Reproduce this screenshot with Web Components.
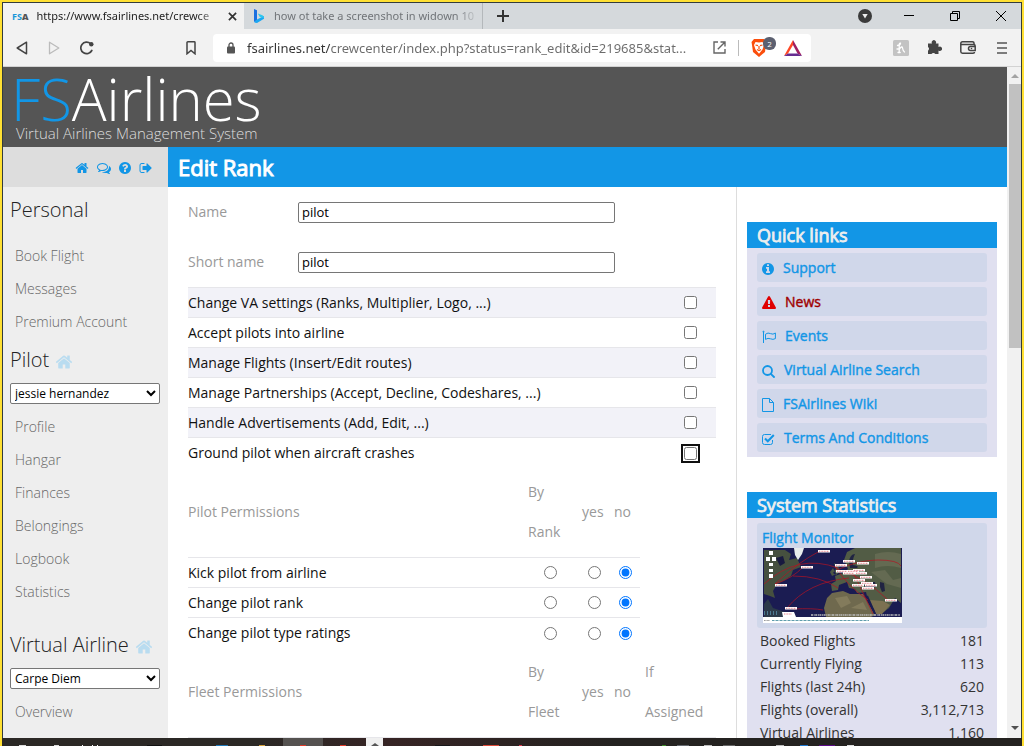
<!DOCTYPE html>
<html lang="en">
<head>
<meta charset="utf-8">
<meta name="viewport" content="width=device-width, initial-scale=1">
<title>FSAirlines - Edit Rank</title>
<style>
  html, body { height: 100%; margin: 0; }
  body {
    font-family: "Open Sans", "Noto Sans", sans-serif;
    font-size: 14px;
    --accent: #1296e6;
    --panel: #e0e0f0;
    --tile: #d0d7ea;
    --muted: #999;
    --line: #e6e6ea;
  }
</style>
</head>
<body>
<browser-window>
  <tab-strip slot="tabs"></tab-strip>
  <tool-bar slot="toolbar"></tool-bar>
  <fs-page>
    <fs-banner slot="banner"></fs-banner>
    <user-links slot="user"></user-links>
    <span slot="title">Edit Rank</span>
    <side-nav slot="nav">
      <nav-section heading="Personal" items="Book Flight|Messages|Premium Account"></nav-section>
      <nav-section heading="Pilot" home choice="jessie hernandez" items="Profile|Hangar|Finances|Belongings|Logbook|Statistics"></nav-section>
      <nav-section heading="Virtual Airline" home spaced choice="Carpe Diem" items="Overview"></nav-section>
    </side-nav>
    <text-field label="Name" value="pilot"></text-field>
    <text-field label="Short name" value="pilot"></text-field>
    <option-table rows="Change VA settings (Ranks, Multiplier, Logo, ...)|Accept pilots into airline|Manage Flights (Insert/Edit routes)|Manage Partnerships (Accept, Decline, Codeshares, ...)|Handle Advertisements (Add, Edit, ...)|Ground pilot when aircraft crashes"></option-table>
    <permission-table caption="Pilot Permissions" scope="By Rank" rows="Kick pilot from airline|Change pilot rank|Change pilot type ratings"></permission-table>
    <permission-table caption="Fleet Permissions" scope="By Fleet" extra="If Assigned" rows=""></permission-table>
    <side-panel slot="aside" heading="Quick links">
      <quick-link icon="info">Support</quick-link>
      <quick-link icon="warning" alert>News</quick-link>
      <quick-link icon="flag">Events</quick-link>
      <quick-link icon="search">Virtual Airline Search</quick-link>
      <quick-link icon="file">FSAirlines Wiki</quick-link>
      <quick-link icon="check">Terms And Conditions</quick-link>
    </side-panel>
    <side-panel slot="aside" heading="System Statistics">
      <flight-monitor></flight-monitor>
      <stat-table></stat-table>
    </side-panel>
  </fs-page>
  <task-bar slot="taskbar"></task-bar>
</browser-window>

<script>
const FA = '0 0 1792 1792';
const ICONS = {
  home: [FA, '<path fill="currentColor" d="M1472 992v480q0 26-19 45t-45 19h-384v-384h-256v384h-384q-26 0-45-19t-19-45v-480q0-1 .5-3t.5-3l575-474 575 474q1 2 1 6zm223-69l-62 74q-8 9-21 11h-3q-13 0-21-7l-692-577-692 577q-12 8-24 7-13-2-21-11l-62-74q-8-10-7-23.5t11-21.5l719-599q32-26 76-26t76 26l244 204v-195q0-14 9-23t23-9h192q14 0 23 9t9 23v408l219 182q10 8 11 21.5t-7 23.5z"/>'],
  help: ['128 128 1536 1536', '<path fill="currentColor" d="M1024 1376v-192q0-14-9-23t-23-9h-192q-14 0-23 9t-9 23v192q0 14 9 23t23 9h192q14 0 23-9t9-23zm256-672q0-88-55.5-163t-138.5-116-170-41q-243 0-371 213-15 24 8 42l132 100q7 6 19 6 16 0 25-12 53-68 86-92 34-24 86-24 48 0 85.5 26t37.5 59q0 38-20 61t-68 45q-63 28-115.5 86.5t-52.5 125.5v36q0 14 9 23t23 9h192q14 0 23-9t9-23q0-19 21.5-49.5t54.5-49.5q32-18 49-28.5t46-35 44.5-48 28-60.5 12.5-81zm384 192q0 209-103 385.5t-279.5 279.5-385.5 103-385.5-103-279.5-279.5-103-385.5 103-385.5 279.5-279.5 385.5-103 385.5 103 279.5 279.5 103 385.5z"/>'],
  chat: [FA, '<path fill="currentColor" d="M704 384q-153 0-286 52t-211.5 141-78.5 191q0 82 53 158t149 132l97 56-35 84q34-20 62-39l44-31 53 10q78 14 153 14 153 0 286-52t211.5-141 78.5-191-78.5-191-211.5-141-286-52zm0-128q191 0 353.5 68.5t256.5 186.5 94 257-94 257-256.5 186.5-353.5 68.5q-86 0-176-16-124 88-278 128-36 9-86 16h-3q-11 0-20.5-8t-11.5-21q-1-3-1-6.5t.5-6.5 2-6l2.5-5 3.5-5.5 4-5 4.5-5 4-4.5q5-6 23-25t26-29.5 22.5-29 25-38.5 20.5-44q-124-72-195-177t-71-224q0-139 94-257t256.5-186.5 353.5-68.5zm822 1169q10 24 20.5 44t25 38.5 22.5 29 26 29.5 23 25q1 1 4 4.5t4.5 5 4 5 3.5 5.5l2.5 5 2 6 .5 6.5-1 6.5q-3 14-13 22t-22 7q-50-7-86-16-154-40-278-128-90 16-176 16-271 0-472-132 58 4 88 4 161 0 309-45t264-129q125-92 192-212t67-254q0-77-23-152 129 71 204 178t75 230q0 120-71 224.5t-195 176.5z"/>'],
  exit: [FA, '<path fill="currentColor" d="M704 1440q0 4 1 20t.5 26.5-3 23.5-10 19.5-20.5 6.5h-320q-119 0-203.5-84.5t-84.5-203.5v-704q0-119 84.5-203.5t203.5-84.5h320q13 0 22.5 9.5t9.5 22.5q0 4 1 20t.5 26.5-3 23.5-10 19.5-20.5 6.5h-320q-66 0-113 47t-47 113v704q0 66 47 113t113 47h312l11.5 1 11.5 3 8 5.5 7 9 2 13.5zm928-544q0 26-19 45l-544 544q-19 19-45 19t-45-19-19-45v-288h-448q-26 0-45-19t-19-45v-384q0-26 19-45t45-19h448v-288q0-26 19-45t45-19 45 19l544 544q19 19 19 45z"/>'],
  info: ['128 128 1536 1536', '<path fill="currentColor" d="M1152 1376v-160q0-14-9-23t-23-9h-96v-512q0-14-9-23t-23-9h-320q-14 0-23 9t-9 23v160q0 14 9 23t23 9h96v320h-96q-14 0-23 9t-9 23v160q0 14 9 23t23 9h448q14 0 23-9t9-23zm-128-896v-160q0-14-9-23t-23-9h-192q-14 0-23 9t-9 23v160q0 14 9 23t23 9h192q14 0 23-9t9-23zm640 416q0 209-103 385.5t-279.5 279.5-385.5 103-385.5-103-279.5-279.5-103-385.5 103-385.5 279.5-279.5 385.5-103 385.5 103 279.5 279.5 103 385.5z"/>'],
  warning: [FA, '<path fill="currentColor" d="M1024 1375v-190q0-14-9.5-23.5t-22.5-9.5h-192q-13 0-22.5 9.5t-9.5 23.5v190q0 14 9.5 23.5t22.5 9.5h192q13 0 22.5-9.5t9.5-23.5zm-2-374l18-459q0-12-10-19-13-11-24-11h-220q-11 0-24 11-10 7-10 21l17 457q0 10 10 16.5t24 6.5h185q14 0 23.5-6.5t10.5-16.5zm-14-934l768 1408q35 63-2 126-17 29-46.5 46t-63.5 17h-1536q-34 0-63.5-17t-46.5-46q-37-63-2-126l768-1408q17-31 47-49t65-18 65 18 47 49z"/>'],
  flag: ['0 0 14 14', '<g fill="none" stroke="currentColor"><path d="M1.5 1.5V13" /><circle cx="1.5" cy="1.8" r=".6"/><path d="M3.5 4.2Q6 2.2 8.5 3.6T13.4 3v5.6Q11 10 8.500 8.800T3.500 9.400Z"/></g>'],
  search: ['0 0 13 13', '<g fill="none" stroke="currentColor" stroke-width="1.800"><circle cx="5.500" cy="5.500" r="4.500"/><path d="M8.800 8.800L12 12" stroke-linecap="round"/></g>'],
  file: ['0 0 12 14', '<g fill="none" stroke="currentColor"><path d="M.5 .5H7.500L11.500 4.500V13.500H.5Z M7.500 .5V4.500H11.500"/></g>'],
  check: ['0 0 13 12', '<g fill="none" stroke="currentColor"><path d="M10.500 7v2.500q0 2-2 2h-6q-2 0-2-2v-6q0-2 2-2h6.500"/><path d="M3 5.500L5.800 8.300 11.800 2" stroke-width="2"/></g>'],
  back: ['0 0 12 14', '<path d="M10.500 1.200V12.800L1.200 7Z" fill="none" stroke="#444" stroke-width="1.500" stroke-linejoin="round"/>'],
  forward: ['0 0 12 14', '<path d="M1.500 1.200V12.800L10.800 7Z" fill="none" stroke="#bbb" stroke-width="1.300" stroke-linejoin="round"/>'],
  reload: ['0 0 14 14', '<path d="M11.800 9.500A5.800 5.800 0 1 1 10.500 2.600" fill="none" stroke="#444" stroke-width="1.700" stroke-linecap="round"/><circle cx="11.300" cy="3.300" r="2.200" fill="#444"/>'],
  bookmark: ['0 0 10 14', '<path d="M1 1.500Q1 .8 1.800 .8H8.200Q9 .8 9 1.500V12.800L5 9.500 1 12.800Z" fill="none" stroke="#444" stroke-width="1.500"/>'],
  lock: ['0 0 8 12', '<path d="M2 5V3a2 2 0 0 1 4 0V5" fill="none" stroke="#555" stroke-width="1.300"/><rect y="4.500" width="8" height="7" rx="1" fill="#555"/>'],
  share: ['0 0 13 13', '<path d="M5 1H1V12H12V8M7.500 1H12V5.500M12 1L4.800 8.200" fill="none" stroke="#666" stroke-width="1.400"/>'],
  shield: ['0 0 16 18', '<path d="M3 0H13L15.500 3 15 6 14 13 8 18 2 13 1 6 .5 3Z" fill="#fb4e0c"/><path d="M4.500 3L8 3.500 11.500 3 13 6 11.500 10.500 8 14.800 4.500 10.500 3 6Z" fill="#fff"/><path d="M4.500 6L7 6.700M11.500 6L9 6.700M8 7v3M6 10.500L8 11.500 10 10.500" stroke="#fb4e0c" stroke-width="1.200" fill="none"/>'],
  bat: ['0 0 18 16', '<path d="M9 0L0 16 4 13.500 9 5Z" fill="#ff4724"/><path d="M9 0L18 16 13.500 13.500 9 5Z" fill="#9e1f63"/><path d="M0 16H18L13.500 13.500H4Z" fill="#662d91"/>'],
  honey: ['0 0 16 16', '<rect width="16" height="16" rx="1.500" fill="#c3c3c3"/><path d="M4.500 5.500Q7.500 5 7.500 3.200 6.200 2.600 6.200 6V12.500M6.200 9.500Q9 5 9.500 8T11.500 12M4 9H6M5 12.500H7.200" fill="none" stroke="#fff" stroke-width="1.300" stroke-linecap="round"/>'],
  puzzle: ['0 0 15 15', '<path fill="#444" d="M1 3.500H5A2.200 2.200 0 1 1 8.800 3.500H11.500V7A2.200 2.200 0 1 1 11.500 10.500V14H8.300A2.200 2.200 0 0 0 4.500 14H1V10.700A2.200 2.200 0 0 0 1 7Z"/>'],
  wallet: ['0 0 16 13', '<g fill="none" stroke="#444" stroke-width="1.500"><path d="M14 3.500V2Q14 .8 12.500 .8H2.500Q.8 .8 .8 2.500V10.500Q.8 12.200 2.500 12.200H13Q14.500 12.200 14.500 11"/><path d="M1 3.500H13.500Q15.200 3.500 15.200 5V9.500H10.500a2 2 0 0 1 0-4H15"/></g><circle cx="11.500" cy="7.500" r=".8" fill="#444"/>'],
  menu: ['0 0 10 12', '<path d="M0 1H10M0 6H10M0 11H10" stroke="#555" stroke-width="1.600"/>'],
  plus: ['0 0 12 12', '<path d="M6 0V12M0 6H12" stroke="#333" stroke-width="2"/>'],
  close: ['0 0 8 8', '<path d="M.8 .8L7.200 7.200M7.200 .8L.8 7.200" stroke="#333" stroke-width="1.500"/>'],
  account: ['0 0 14 14', '<circle cx="7" cy="7" r="7" fill="#3b3b3b"/><path d="M4.300 5H9.700L7 9.500Z" fill="#eee"/>'],
  minimize: ['0 0 10 10', '<path d="M0 4.500H10" stroke="#000"/>'],
  restore: ['0 0 10 10', '<path d="M.5 2.500H7.500V9.500H.5ZM2.500 2.500V.5H9.500V7.500H7.500" fill="none" stroke="#000"/>'],
  quit: ['0 0 10 10', '<path d="M0 0L10 10M10 0L0 10" stroke="#000"/>'],
  bing: ['0 0 10 14', '<path d="M0 0L3 1.200V11L0 13Z" fill="#1b6fe0"/><path d="M0 13L3 10.500 10 7V9.800L3 14Q1 14 0 13Z" fill="#1ba7f2"/><path d="M3.800 4.500L8.500 6.300Q10 7.200 10 9L5.800 8Z" fill="#2fc6ee"/>']
};

class Base extends HTMLElement {
  connectedCallback() {
    if (this.shadowRoot) return;
    this.attachShadow({ mode: 'open' }).innerHTML =
      '<style>:host{display:block;box-sizing:border-box}*{box-sizing:border-box}' +
      'a{color:inherit;text-decoration:none}' +
      'button{border:0;padding:0;background:none;font:inherit;color:inherit;display:flex;align-items:center;justify-content:center}' +
      this.css() + '</style>' + this.html();
  }
  list(name) { return this.getAttribute(name).split('|').filter(Boolean); }
}
const define = (name, css, html = '<slot></slot>') => customElements.define(name, class extends Base {
  css() { return css; }
  html() { return typeof html === 'function' ? html(this) : html; }
});
const icon = (name, w, h = w) => `<ui-icon name="${name}" w="${w}" h="${h}"></ui-icon>`;

define('ui-icon', ':host{flex:none;line-height:0}svg{display:block}', el => {
  const [box, body] = ICONS[el.getAttribute('name')];
  return `<svg aria-hidden="true" width="${el.getAttribute('w')}" height="${el.getAttribute('h')}" viewBox="${box}">${body}</svg>`;
});

define('browser-window', `
  :host{height:100vh;display:flex;flex-direction:column;border:solid #ffe033;border-width:2px 2px 0;background:#d5d9dc;overflow:hidden}
  .frame{flex:1;min-height:0;display:flex;flex-direction:column;border:1px solid #333c3c;border-bottom:0}
  .view{flex:1;min-height:0;display:flex;border-top:1px solid #d2d2d2}
  slot[name=taskbar]::slotted(*){flex:none}
  .page{flex:1;min-width:0;overflow:hidden}
  .bar{width:14px;background:#f1f1f1;display:flex;flex-direction:column;align-items:center;padding:7px 0 4px 2px}
  .up,.down{border:solid transparent;border-width:0 4px 4px;border-bottom-color:#a3a3a3;margin-bottom:6px}
  .thumb{width:100%;height:40%;background:#c1c1c1}
  .down{border-width:4px 4px 0;border-top-color:#505050;margin:auto 0 4px}`,
  `<div class="frame"><slot name="tabs"></slot><slot name="toolbar"></slot>
   <div class="view"><div class="page"><slot></slot></div>
   <div class="bar"><i class="up"></i><i class="thumb"></i><i class="down"></i></div></div></div>
   <slot name="taskbar"></slot>`);

define('tab-strip', `
  :host{height:26px;display:flex;align-items:stretch;font:11px "Noto Sans","Open Sans",sans-serif;color:#333}
  .tab{width:241px;display:flex;align-items:center;padding:0 7px 0 9px;gap:8px;white-space:nowrap}
  .on{background:#f2f2f2;color:#222}
  .tab + .tab{color:#707478;width:239px;border-right:1px solid #b4b8bb;padding:0 2px 0 10px;gap:10px}
  .title{flex:1;min-width:0;overflow:hidden;mask-image:linear-gradient(90deg,#000 88%,transparent);line-height:20px;justify-content:flex-start}
  .fav{font:700 9px "Open Sans",sans-serif;color:#1b96d8}.fav b{color:#555}
  .add{width:40px}
  .sys{margin-left:auto;display:flex;gap:36px;padding-right:15px}
  .sys button:first-child{margin-right:-4px}`,
  `<div class="tab on"><span class="fav">FS<b>A</b></span><button class="title">https://www.fsairlines.net/crewce</button><button aria-label="Close tab">${icon('close', 9)}</button></div>
   <div class="tab">${icon('bing', 10, 14)}<button class="title">how ot take a screenshot in widown 10</button></div>
   <button class="add" aria-label="New tab">${icon('plus', 12)}</button>
   <div class="sys"><button aria-label="Search tabs">${icon('account', 14)}</button><button aria-label="Minimize">${icon('minimize', 10)}</button><button aria-label="Restore">${icon('restore', 10)}</button><button aria-label="Close">${icon('quit', 10)}</button></div>`);

define('tool-bar', `
  :host{height:37px;display:flex;align-items:center;background:#f2f2f2;padding:0 14px 0 13px}
  .nav{display:flex;gap:20px;width:170px}
  .nav + button{margin-right:17px}
  .omni{flex:1;max-width:598px;height:28px;background:#fff;border-radius:4px;display:flex;align-items:center;padding:0 9px 0 14px;gap:12px;margin-right:auto}
  input{flex:1;min-width:0;height:24px;border:0;padding:0;outline:0;font:13px "Noto Sans","Open Sans",sans-serif;color:transparent;background:linear-gradient(90deg,#333 84px,#6b6b6b 84px);-webkit-background-clip:text;background-clip:text}
  .sep{width:1px;height:16px;background:#bbb}
  .shield{position:relative;margin-right:5px}
  .badge{position:absolute;left:12px;top:-2px;width:13px;height:13px;border-radius:6px;background:#5c6070;color:#fff;font-size:8px;line-height:13px;text-align:center}
  .ext{display:flex;gap:18px;margin-left:16px}
  .ext button:last-child{margin-left:3px}`,
  `<div class="nav"><button aria-label="Back">${icon('back', 12, 14)}</button><button aria-label="Forward">${icon('forward', 12, 14)}</button><button aria-label="Reload">${icon('reload', 14)}</button></div>
   <button aria-label="Bookmark">${icon('bookmark', 10, 14)}</button>
   <div class="omni">${icon('lock', 8, 12)}<input aria-label="Address" value="fsairlines.net/crewcenter/index.php?status=rank_edit&amp;id=219685&amp;stat...">
   <button aria-label="Share">${icon('share', 13)}</button><i class="sep"></i><button class="shield" aria-label="Shields">${icon('shield', 16, 18)}<span class="badge">2</span></button><button aria-label="Rewards">${icon('bat', 18, 16)}</button></div>
   <div class="ext"><button aria-label="Honey">${icon('honey', 16)}</button><button aria-label="Extensions">${icon('puzzle', 15)}</button><button aria-label="Wallet">${icon('wallet', 16, 13)}</button><button aria-label="Menu">${icon('menu', 10, 12)}</button></div>`);

define('fs-page', `
  .strip{display:flex;height:40px}
  .user{width:165px;background:#ddd}
  h1{flex:1;margin:0;padding-left:10px;background:var(--accent);color:#fff;font-size:22px;line-height:40px;font-weight:400;-webkit-text-stroke:1px}
  .body{display:flex;background:#fff}
  .nav{width:165px;flex:none;background:#eee;min-height:700px}
  main{flex:1;min-width:0;padding:0 20px}
  aside{width:271px;flex:none;border-left:1px solid #ddd;padding:35px 10px 0;display:flex;flex-direction:column;gap:35px}`,
  `<slot name="banner"></slot><div class="strip"><div class="user"><slot name="user"></slot></div><h1><slot name="title"></slot></h1></div>
   <div class="body"><div class="nav"><slot name="nav"></slot></div><main><slot></slot></main><aside><slot name="aside"></slot></aside></div>`);

define('fs-banner', `
  :host{height:80px;background:#555;padding:4px 0 0 8px;font-weight:300;color:#fff}
  .logo{font-size:58px;line-height:56px;height:52px}
  .logo b{font-weight:300;color:var(--accent)}
  .tag{font-size:15px;line-height:20px;color:#ddd;padding-left:5px}`,
  `<div class="logo"><b>FS</b>Airlines</div><div class="tag">Virtual Airlines Management System</div>`);

define('user-links', `
  :host{height:40px;display:flex;align-items:center;justify-content:flex-end;gap:8px;color:var(--accent);padding:2px 15px 0 0}`,
  `<a href="#" aria-label="Home">${icon('home', 14)}</a><a href="#" aria-label="Messages">${icon('chat', 14)}</a><a href="#" aria-label="Help">${icon('help', 12)}</a><a href="#" aria-label="Sign out">${icon('exit', 14)}</a>`);

define('side-nav', ':host{padding:1px 8px 0 7px}');

define('nav-section', `
  :host{padding-top:7px}
  :host([spaced]){padding-top:22px}
  h2{display:flex;align-items:center;gap:6px;margin:0 0 14px;font-size:20px;line-height:30px;font-weight:300;color:#222}
  :host([choice]) h2{margin-bottom:8px}
  h2 ui-icon{color:#b9dcf0;padding-top:4px}
  select{display:block;width:150px;height:21px;margin-bottom:6px;border:1px solid #767676;border-radius:2px;background:#fff;color:#000;font:12px "Open Sans",sans-serif;padding:0}
  ul{list-style:none;margin:0;padding:0 0 0 5px;font-weight:300;color:#666;line-height:33px}`,
  el => `<h2>${el.getAttribute('heading')}${el.hasAttribute('home') ? icon('home', 18) : ''}</h2>
   ${el.hasAttribute('choice') ? `<select aria-label="${el.getAttribute('heading')}"><option>${el.getAttribute('choice')}</option></select>` : ''}
   <ul>${el.list('items').map(t => `<li><a href="#">${t}</a></li>`).join('')}</ul>`);

define('text-field', `
  :host{height:50px;display:flex;align-items:center}
  label{width:110px;padding-bottom:2px;color:var(--muted)}
  input{width:317px;height:21px;border:1px solid #767676;border-radius:2px;padding:0 3px;font:13px "Open Sans",sans-serif;color:#000;background:#fff}`,
  el => `<label for="f">${el.getAttribute('label')}</label><input id="f" type="text" value="${el.getAttribute('value')}">`);

define('option-table', `
  table{width:100%;border-collapse:collapse}
  th,td{height:30px;padding:0;border-top:1px solid var(--line);color:#111;font-weight:400;text-align:left;line-height:20px}
  td{width:51px;text-align:center;padding-bottom:2px}
  input{width:13px;height:13px;margin:0;vertical-align:middle}
  tr:nth-child(odd){background:#f2f2f8}
  tr:last-child input{outline:2px solid #101010;outline-offset:1px;border-radius:2px}`,
  el => `<table>${el.list('rows').map((t, i) => `<tr><th scope="row"><label for="o${i}">${t}</label></th><td><input type="checkbox" id="o${i}"></td></tr>`).join('')}</table>`);

define('permission-table', `
  table{border-collapse:collapse;table-layout:fixed;width:452px}
  :host([extra]) table{width:528px}
  .label{width:340px}.scope{width:54px}.yes{width:32px}.no{width:26px}.extra{width:76px}
  thead th{height:90px;padding:0;line-height:40px;color:var(--muted);font-weight:400;text-align:left;border-bottom:1px solid var(--line)}
  thead th.extra{padding-left:5px}
  tbody th,tbody td{height:30px;padding:0;border-top:1px solid var(--line);color:#111;font-weight:400;text-align:left;line-height:20px}
  tbody td{text-align:center;padding-bottom:2px}
  tbody td.scope{padding-right:10px}tbody td.yes{padding-right:8px}tbody td.no{padding-right:4px}
  input{width:13px;height:13px;margin:0;vertical-align:middle}`,
  el => {
    const extra = el.getAttribute('extra');
    const two = s => s.replace(' ', '<br>');
    const radio = (t, i, c, on) => `<td class="${c}"><input type="radio" name="r${i}" aria-label="${t}: ${c}"${on ? ' checked' : ''}></td>`;
    return `<table><thead><tr><th class="label">${el.getAttribute('caption')}</th><th class="scope">${two(el.getAttribute('scope'))}</th><th class="yes">yes</th><th class="no">no</th>${extra ? `<th class="extra">${two(extra)}</th>` : ''}</tr></thead>
     <tbody>${el.list('rows').map((t, i) => `<tr><th scope="row">${t}</th>${radio(t, i, 'scope')}${radio(t, i, 'yes')}${radio(t, i, 'no', true)}${extra ? radio(t, i, 'extra') : ''}</tr>`).join('')}</tbody></table>`;
  });

define('side-panel', `
  h2{margin:0;height:26px;padding-left:10px;background:var(--accent);color:#eee;font-size:18px;line-height:26px;font-weight:400;-webkit-text-stroke:0.8px}
  .body{background:var(--panel);padding:5px 10px}
  ::slotted(quick-link:not(:last-child)){margin-bottom:5px}`,
  el => `<h2>${el.getAttribute('heading')}</h2><div class="body"><slot></slot></div>`);

define('quick-link', `
  :host{height:29px;border-radius:3px;background:var(--tile);color:var(--accent);padding:0 5px}
  a{display:flex;align-items:center;gap:9px;height:29px;-webkit-text-stroke:0.4px}
  ui-icon{padding-top:3px}
  :host([alert]){color:#a00000}:host([alert]) ui-icon{color:#e00000}`,
  el => {
    const size = { info: [12, 12], warning: [14, 14], flag: [14, 14], search: [13, 13], file: [12, 14], check: [13, 12] }[el.getAttribute('icon')];
    return `<a href="#">${icon(el.getAttribute('icon'), ...size)}<slot></slot></a>`;
  });

define('flight-monitor', `
  :host{height:105px;border-radius:3px;background:var(--tile);padding:5px 5px 0;color:var(--accent)}
  a{display:block;-webkit-text-stroke:0.4px;line-height:20px}
  svg{display:block;margin-left:1px}`,
  () => {
    const tags = [[55,2],[38,18],[12,36],[22,59],[80,12],[94,14],[72,16],[73,22],[84,22],[90,21],[80,24],[92,24],[97,28],[90,31],[98,34],[89,36],[102,36],[99,39],[122,51]];
    return `<a href="#">Flight Monitor<svg width="139" height="75" viewBox="0 0 139 75" role="img" aria-label="Map">
    <rect width="139" height="75" fill="#fff"/><rect width="139" height="69" fill="#1b1c52"/>
    <path d="M1 2H22L28 6 26 12 34 10 38 19 30 22 28 28 22 32 14 36 10 43 12 50 7 48 1 46Z" fill="#46503f"/>
    <path d="M13 10L20 8 22 15 17 18Z" fill="#18193f"/>
    <path d="M31 0H41L39 6 35 12 32 7Z" fill="#e8ecec"/>
    <path d="M1 56L5 51 10 60 22 64 34 69H1Z" fill="#2c3a4a"/>
    <path d="M70 20L67 24 69 28 73 26ZM71 15L75 17 77 24 73 27 70 25 73 21Z" fill="#4c5643"/>
    <path d="M81 12L84 4 92 0H138V55L132 50 126 60 118 66 110 60 104 48 103 44 94 45 92 41 86 40 84 34 76 37 75 42 69 43 68 36 73 33 72 28 80 25 85 21 83 16Z" fill="#525c45"/>
    <path d="M112 6Q125 2 138 6V20Q124 16 112 20ZM108 24L122 22 130 32 138 30V40L124 36Z" fill="#646a52"/>
    <path d="M86 14Q87 6 92 6 89 12 90 17 97 18 94 20L87 20Z" fill="#202442"/>
    <path d="M69 45L80 43 87 46 100 46 105 55 112 67 108 69H63L61 60 64 50Z" fill="#6f694e"/>
    <path d="M72 50L84 48 88 55 78 60ZM88 60L100 54 104 62Z" fill="#837b5c"/>
    <path d="M107 52L120 53 127 57 119 66 113 66Z" fill="#7c7151"/>
    <path d="M104 48L112 66" stroke="#1b1c52" stroke-width="2"/>
    <path d="M100 34L112 34 113 39 103 41ZM117 34L121 35 122 43 119 44 117 39Z" fill="#202442"/>
    <g fill="none" stroke="#b51222" stroke-width=".7"><path d="M12 36Q35 14 57 3M1 36Q35 5 75 20M30 28Q58 28 75 40M24 60Q45 34 86 30M30 61Q50 60 60 62M72 18Q84 38 105 52M74 22Q95 12 115 12T138 18M80 24Q100 28 125 52M12 36Q30 30 40 19M90 24L110 66"/></g>
    <g fill="#fff">${tags.map(([x, y]) => `<rect x="${x}" y="${y}" width="12" height="2.500"/>`).join('')}<path d="M6 3h4v4h-4zM3 9h4v4h-4zM9 9h4v4h-4zM6 15h4v3h-4zM6 21h4v3h-4zM6 26h4v4h-4zM19 64h12l2 5h-13z"/></g>
    <g stroke="#e0606a" stroke-width=".8" stroke-dasharray="1 .6">${tags.map(([x, y]) => `<path d="M${x + 1} ${y + 1.3}h10"/>`).join('')}<path d="M21 66h8"/></g>
    <path d="M48 67H137" stroke="#bbb" stroke-width="1.500" stroke-dasharray="2 .7 1 .5"/>
    <path d="M1 65H16" stroke="#4d7a92" stroke-width="4" stroke-dasharray="1 2"/>
    <path d="M1 72.500H7" stroke="#999" stroke-dasharray="1 .4"/><path d="M9 72.500H106" stroke="#5f9dac" stroke-dasharray="2 .5 1 .5"/>
    </svg></a>`;
  });

define('stat-table', `
  :host{padding-top:1px}
  table{width:100%;border-collapse:collapse;color:#333}
  th,td{padding:0 3px;height:23px;line-height:23px;font-weight:400;text-align:left}
  td{text-align:right}`,
  `<table>${[['Booked Flights', '181'], ['Currently Flying', '113'], ['Flights (last 24h)', '620'], ['Flights (overall)', '3,112,713'], ['Virtual Airlines', '1,160']].map(r => `<tr><th scope="row">${r[0]}</th><td>${r[1]}</td></tr>`).join('')}</table>`);

define('task-bar', `
  :host{height:8px;margin:0 -2px;border:solid #d0b400;border-width:0 2px;background:linear-gradient(90deg,#2b2825 25%,#362424 38%,#242220 60%)}
  svg{display:block}`,
  `<svg width="1020" height="8" aria-hidden="true"><rect x="281" width="40" height="8" fill="#555250"/><rect x="364" width="17" height="8" fill="#f0f0f0"/><path d="M369 8l4-3 4 3z" fill="#555"/>
   ${[[17,7,'#ddd'],[52,5,'#ddd'],[80,1,'#fff'],[90,1,'#fff'],[95,1,'#fff'],[145,15,'#111'],[214,12,'#1f78b8'],[257,6,'#d5a13a'],[298,6,'#e23a28'],[338,6,'#e23a28'],[433,15,'#17161a'],[481,16,'#dd4a38'],[517,3,'#e2394e'],[660,4,'#3b8a28'],[675,12,'#666a70'],[702,8,'#bbb'],[721,12,'#666'],[774,8,'#bbb'],[798,8,'#1f78d0'],[817,16,'#5b0a88'],[845,7,'#ddd']].map(([x, w, c]) => `<rect x="${x}" y="7" width="${w}" height="1" fill="${c}"/>`).join('')}</svg>`);
</script>
</body>
</html>
